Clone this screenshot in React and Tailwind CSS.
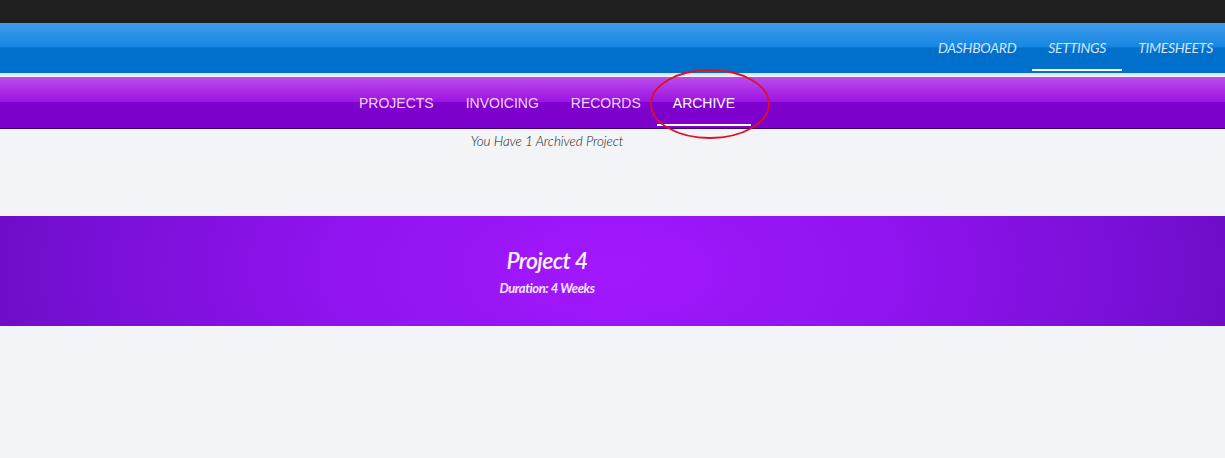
import React from 'react';

const topLinks = ['Dashboard', 'Settings', 'Timesheets'];
const subLinks = ['Projects', 'Invoicing', 'Records', 'Archive'];

const App = () => {
  return (
    <div className="min-h-screen bg-[#f3f4f8] overflow-hidden" style={{ fontFamily: 'Lato, "Liberation Sans", sans-serif' }}>
      {/* window chrome strip */}
      <div className="h-[23px] bg-[#1f1f1f]" />

      {/* main blue nav */}
      <div className="h-[50px] bg-[linear-gradient(to_bottom,#3f9ce9_0%,#1686e3_48%,#0070cc_50%,#0070cc_100%)] flex justify-end">
        <nav className="flex h-full mr-[-4px]">
          {topLinks.map((link) => (
            <a
              key={link}
              className="relative flex items-center px-4 pb-[2px] text-[14px] italic uppercase tracking-[-0.3px] text-[#cfe5fb]"
            >
              {link}
              {link === 'Settings' && <span className="absolute left-0 right-0 bottom-[2px] h-[2px] bg-white" />}
            </a>
          ))}
        </nav>
      </div>

      <div className="h-[4px] bg-[linear-gradient(to_bottom,#d6dbe2,#f4f5f8)]" />

      {/* purple sub nav */}
      <div className="h-[52px] bg-[linear-gradient(to_bottom,#ba4dea_0%,#9d14e4_48%,#7e00cc_50%,#7e00cc_100%)] border-b border-[#34077a]">
        <div className="w-[1094px] flex justify-center h-full">
          <nav className="relative flex h-full pt-[2px]">
            {subLinks.map((link) => (
              <a
                key={link}
                className={`relative flex items-center px-4 text-[14px] uppercase ${
                  link === 'Archive' ? 'text-white' : 'text-[#f3d5f8]'
                }`}
                style={{ fontFamily: '"Liberation Sans", Arial, sans-serif' }}
              >
                {link}
                {link === 'Archive' && <span className="absolute left-0 right-0 bottom-[2px] h-[2px] bg-white" />}
              </a>
            ))}
            <svg className="absolute left-[305px] top-[-9px] pointer-events-none" width="124" height="72" viewBox="0 0 124 72">
              <ellipse cx="62" cy="36" rx="59" ry="34" fill="none" stroke="#e0101e" strokeWidth="1.8" />
            </svg>
          </nav>
        </div>
      </div>

      <div className="w-[1094px] flex justify-center pt-[2px]">
        <p className="text-[13.5px] italic font-light text-[#222] tracking-[-0.1px]">You Have 1 Archived Project</p>
      </div>

      {/* archived project card */}
      <div className="mt-[65px] h-[110px] bg-[radial-gradient(ellipse_55%_300%_at_50%_50%,#a218fe_0%,#9114f0_40%,#7a10d8_75%,#690cc2_100%)]">
        <div className="w-[1094px] h-full flex flex-col items-center justify-center pt-[2px]">
          <h2 className="text-[23px] italic font-semibold text-[#fbf2ff] leading-tight tracking-[-0.6px]">Project 4</h2>
          <p className="text-[13px] italic font-bold text-[#f6e6ff] tracking-[-0.4px] mt-[4px]">Duration: 4 Weeks</p>
        </div>
      </div>
    </div>
  );
};

export default App;
